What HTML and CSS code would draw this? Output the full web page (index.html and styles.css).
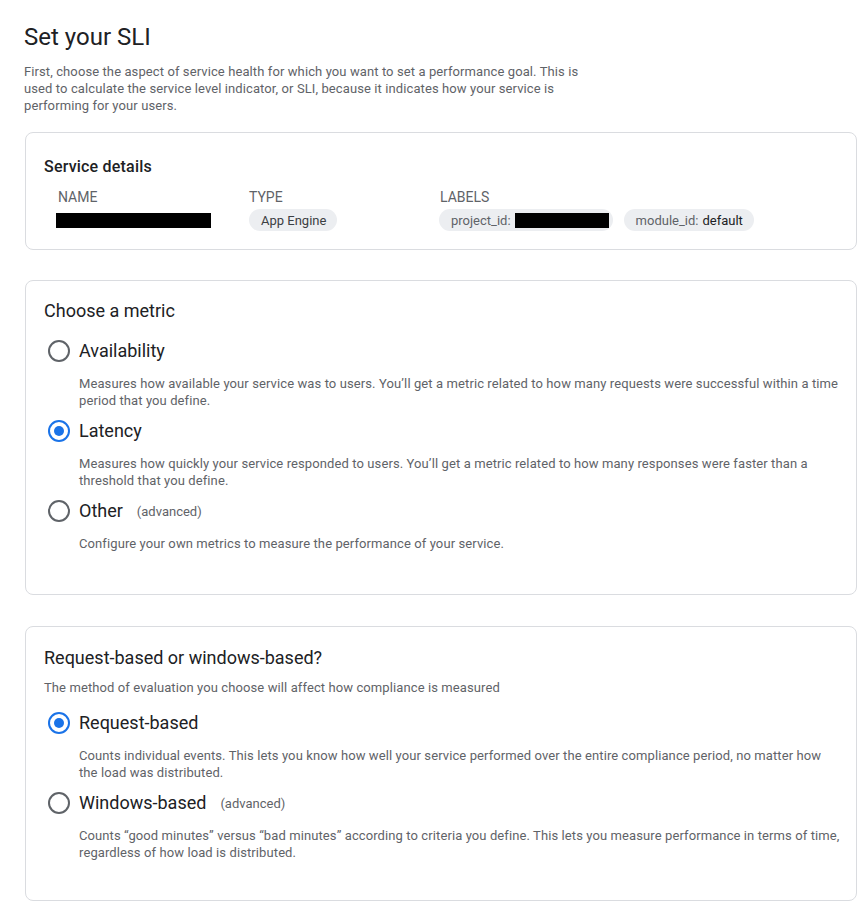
FILE: index.html
```html
<!DOCTYPE html>
<html lang="en">
<head>
<meta charset="utf-8">
<title>Set your SLI</title>
<link rel="stylesheet" href="styles.css">
</head>
<body>
<main class="page">
  <h1 class="title">Set your SLI</h1>
  <p class="intro">First, choose the aspect of service health for which you want to set a performance goal. This is used to calculate the service level indicator, or SLI, because it indicates how your service is performing for your users.</p>

  <section class="card card-details">
    <h2 class="details-heading">Service details</h2>
    <div class="details-grid">
      <div class="details-col">
        <div class="col-label">NAME</div>
        <div class="col-value"><span class="redact redact-name"></span></div>
      </div>
      <div class="details-col">
        <div class="col-label">TYPE</div>
        <div class="col-value"><span class="chip">App Engine</span></div>
      </div>
      <div class="details-col details-col-wide">
        <div class="col-label">LABELS</div>
        <div class="col-value chips">
          <span class="chip chip-redacted">project_id: <span class="redact redact-project"></span></span>
          <span class="chip">module_id: <span class="chip-strong">default</span></span>
        </div>
      </div>
    </div>
  </section>

  <section class="card card-metric">
    <h2 class="card-heading">Choose a metric</h2>
    <div class="option">
      <div class="option-row"><span class="radio"></span><span class="option-label">Availability</span></div>
      <p class="option-desc">Measures how available your service was to users. You’ll get a metric related to how many requests were successful within a time period that you define.</p>
    </div>
    <div class="option">
      <div class="option-row"><span class="radio radio-checked"></span><span class="option-label">Latency</span></div>
      <p class="option-desc">Measures how quickly your service responded to users. You’ll get a metric related to how many responses were faster than a threshold that you define.</p>
    </div>
    <div class="option">
      <div class="option-row"><span class="radio"></span><span class="option-label">Other</span><span class="option-note">(advanced)</span></div>
      <p class="option-desc">Configure your own metrics to measure the performance of your service.</p>
    </div>
  </section>

  <section class="card card-method">
    <h2 class="card-heading">Request-based or windows-based?</h2>
    <p class="card-sub">The method of evaluation you choose will affect how compliance is measured</p>
    <div class="option">
      <div class="option-row"><span class="radio radio-checked"></span><span class="option-label">Request-based</span></div>
      <p class="option-desc">Counts individual events. This lets you know how well your service performed over the entire compliance period, no matter how the load was distributed.</p>
    </div>
    <div class="option">
      <div class="option-row"><span class="radio"></span><span class="option-label">Windows-based</span><span class="option-note">(advanced)</span></div>
      <p class="option-desc">Counts “good minutes” versus “bad minutes” according to criteria you define. This lets you measure performance in terms of time, regardless of how load is distributed.</p>
    </div>
  </section>
</main>
</body>
</html>
```

FILE: styles.css
```css
* { box-sizing: border-box; }

html, body {
  margin: 0;
  padding: 0;
  background: #ffffff;
}

body {
  font-family: Roboto, "Liberation Sans", Arial, sans-serif;
  color: #202124;
}

.page {
  padding: 23px 6px 20px 24px;
}

.title {
  margin: 0;
  font-size: 24px;
  line-height: 28px;
  font-weight: 400;
  color: #202124;
}

.intro {
  margin: 12px 0 0 0;
  width: 570px;
  font-size: 13px;
  line-height: 17px;
  letter-spacing: 0.1px;
  color: #5f6368;
}

.card {
  margin-left: 1px;
  border: 1px solid #dadce0;
  border-radius: 8px;
  background: #fff;
}

.card-details {
  margin-top: 18px;
  padding: 22px 18px 18px 18px;
  height: 118px;
}

.details-heading {
  margin: 0;
  font-size: 16px;
  line-height: 24px;
  font-weight: 500;
  color: #202124;
  letter-spacing: 0.2px;
}

.details-grid {
  display: flex;
  padding-left: 14px;
  margin-top: 9px;
}

.details-col {
  width: 191px;
  flex: none;
}

.details-col-wide {
  width: auto;
}

.col-label {
  font-size: 14px;
  line-height: 18px;
  color: #5f6368;
}

.col-value {
  margin-top: 3px;
  height: 22px;
  display: flex;
  align-items: center;
}

.chips {
  gap: 11px;
  margin-left: -1px;
}

.redact {
  display: inline-block;
  background: #000;
}

.redact-name {
  width: 155px;
  height: 15px;
  margin-left: -2px;
}

.redact-project {
  width: 94px;
  height: 15px;
  margin-left: 4px;
}

.chip {
  display: inline-flex;
  align-items: center;
  height: 22px;
  padding: 0 11px 0 12px;
  border-radius: 11px;
  background: #eceef1;
  font-size: 13px;
  color: #3c4043;
  white-space: nowrap;
}

.chip-redacted {
  padding-right: 4px;
}

.chips .chip {
  color: #5f6368;
}

.chip-strong {
  color: #202124;
  margin-left: 4px;
}

.card-metric {
  margin-top: 30px;
  padding: 18px 14px 40px 18px;
}

.card-method {
  margin-top: 31px;
  padding: 18px 14px 37px 18px;
}

.card-heading {
  margin: 0;
  font-size: 18px;
  line-height: 24px;
  font-weight: 400;
  color: #202124;
}

.card-metric .card-heading {
  margin-bottom: 8px;
}

.card-method .card-heading {
  margin-top: 1px;
}

.card-sub {
  margin: 9px 0 7px 0;
  font-size: 13px;
  line-height: 17px;
  letter-spacing: 0.1px;
  color: #5f6368;
}

.option-row {
  display: flex;
  align-items: center;
  height: 40px;
  padding-left: 4px;
}

.radio {
  flex: none;
  width: 22px;
  height: 22px;
  border: 2px solid #5f6368;
  border-radius: 50%;
  margin-right: 9px;
  display: inline-flex;
  align-items: center;
  justify-content: center;
}

.radio-checked {
  border-color: #1a73e8;
}

.radio-checked::after {
  content: "";
  width: 10px;
  height: 10px;
  border-radius: 50%;
  background: #1a73e8;
}

.option-label {
  font-size: 18px;
  line-height: 24px;
  color: #202124;
}

.option-note {
  margin-left: 14px;
  font-size: 13px;
  color: #5f6368;
}

.option-desc {
  margin: 4px 0 2px 0;
  padding-left: 35px;
  font-size: 13px;
  line-height: 17px;
  letter-spacing: 0.1px;
  color: #5f6368;
}
```
